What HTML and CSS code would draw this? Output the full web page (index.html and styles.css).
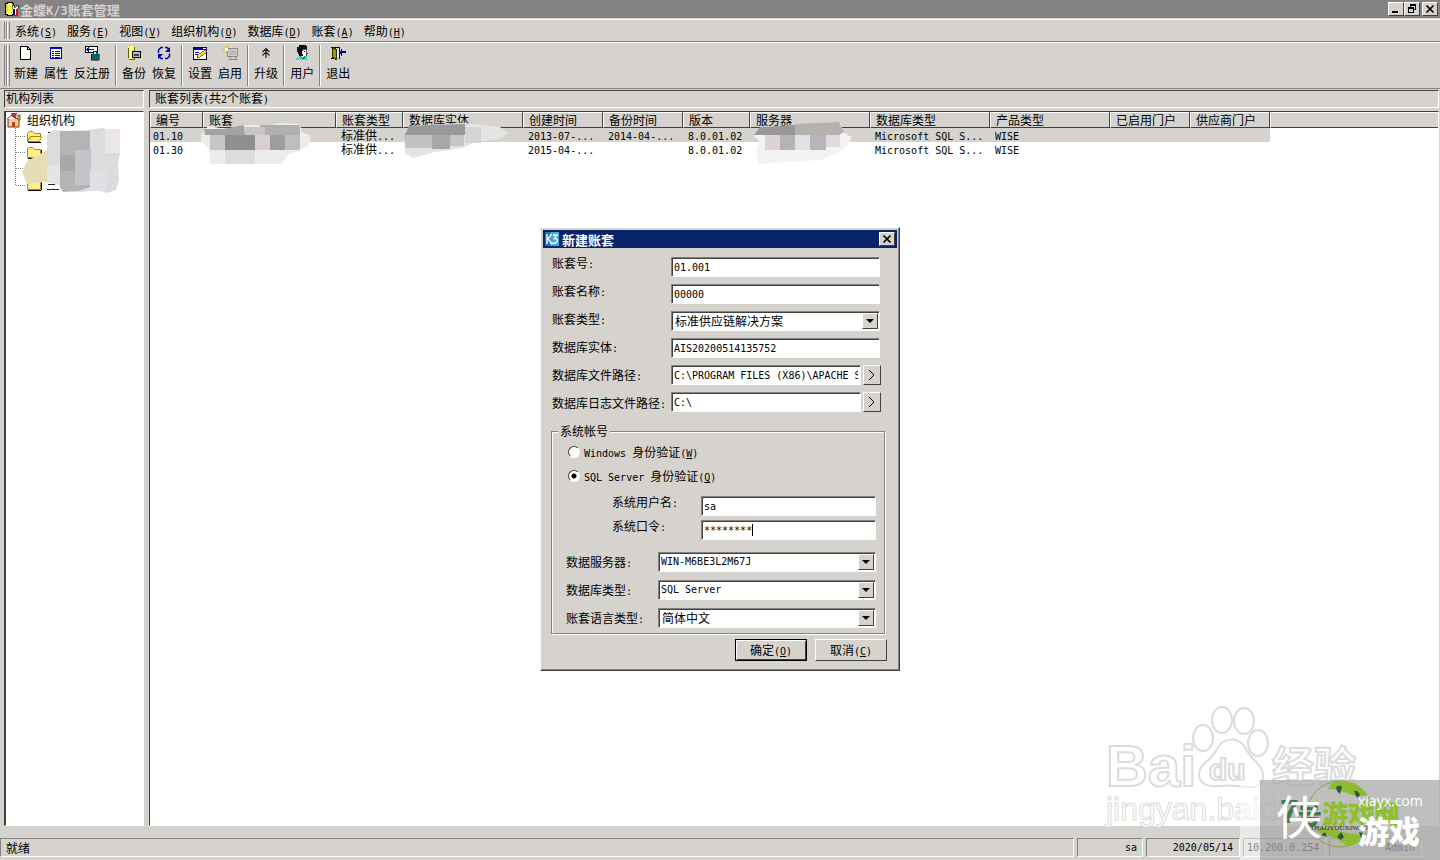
FILE: index.html
```html
<!DOCTYPE html>
<html lang="zh-CN">
<head>
<meta charset="utf-8">
<title>金蝶K/3账套管理</title>
<link rel="stylesheet" href="styles.css">
</head>
<body>
<header class="titlebar">
  <svg class="app-icon" width="16" height="16" viewBox="0 0 16 16" shape-rendering="crispEdges"><path d="M1 2h2V1h5v1h1v11H8v1H3v-1H1z" fill="#ff6" stroke="#000"/><path d="M2 3h2v9H2z" fill="#dd4"/><path d="M8 4h2v2h2V4h2v3l-2 2v5h-2V9L8 7z" fill="#fff" stroke="#000" stroke-width=".6"/><path d="M9 8h2v6H9z" fill="#008"/><path d="M12 8h2v7h-2z" fill="#d11"/></svg>
  <h1 class="title">金蝶<span class="lt">K/3</span>账套管理</h1>
  <div class="win-buttons">
    <button class="win-btn" aria-label="最小化"><svg width="12" height="10" shape-rendering="crispEdges"><path d="M2 7h6v2H2z"/></svg></button>
    <button class="win-btn" aria-label="还原"><svg width="12" height="10" shape-rendering="crispEdges"><path d="M4 0h6v6H8V5h1V2H5v1H4zM2 3h6v6H2zM3 5v3h4V5z" fill-rule="evenodd"/></svg></button>
    <button class="win-btn last" aria-label="关闭"><svg width="12" height="10"><path d="M2.500 1.500l7 7M9.500 1.500l-7 7" stroke="#000" stroke-width="1.700"/></svg></button>
  </div>
</header>

<nav class="menubar">
  <span class="grip"></span>
  <button>系统<span class="a">(<u>S</u>)</span></button>
  <button>服务<span class="a">(<u>E</u>)</span></button>
  <button>视图<span class="a">(<u>V</u>)</span></button>
  <button>组织机构<span class="a">(<u>O</u>)</span></button>
  <button>数据库<span class="a">(<u>D</u>)</span></button>
  <button>账套<span class="a">(<u>A</u>)</span></button>
  <button>帮助<span class="a">(<u>H</u>)</span></button>
</nav>

<div class="toolbar">
  <span class="grip"></span>
  <button><svg class="ico" viewBox="0 0 16 16" shape-rendering="crispEdges"><path d="M2.500 1.500h7l3 3v10h-10z" fill="#fff" stroke="#000"/><path d="M9.500 1.500v3h3" fill="none" stroke="#000"/></svg>新建</button>
  <button><svg class="ico" viewBox="0 0 16 16" shape-rendering="crispEdges"><path d="M2.500 2.500h11v11h-11z" fill="#fff" stroke="#008"/><path d="M2 2h12v2H2zM4 6h2v1H4zM7 6h5v1H7zM4 8h2v1H4zM7 8h5v1H7zM4 10h2v1H4zM7 10h5v1H7zM4 12h2v1H4zM7 12h5v1H7z" fill="#00c"/></svg>属性</button>
  <button><svg class="ico" viewBox="0 0 16 16" shape-rendering="crispEdges"><path d="M1.500 1.500h12v6h-12z" fill="#fff" stroke="#000"/><path d="M2 4h1V3h1V2h1v2h5v1H5v2H4V6H3V5H2z" fill="#00a"/><path d="M9 6h4v3h2v6H7V9h2z" fill="#066" stroke="#000" stroke-width=".5"/><path d="M10 7h2v2h-2z" fill="#ddd"/></svg>反注册</button>
  <span class="sep"></span>
  <button><svg class="ico" viewBox="0 0 16 16" shape-rendering="crispEdges"><path d="M2 2h2V1h4v1h1v12H3v-1H2z" fill="#ff4"/><path d="M2 3v10M8.500 2v12M3 14.500h6" stroke="#660" fill="none"/><path d="M4 2h2v11H4z" fill="#ffa"/><path d="M6.500 6.500h8v6h-8z" fill="#bbb" stroke="#000"/><path d="M8 9h5v2H8z" fill="#444"/></svg>备份</button>
  <button><svg class="ico" viewBox="0 0 16 16"><path d="M2.500 8V5L5 2.500h2M9 2.500h2l2 2M13.500 8.500v3l-2.500 2H9M7 13.500H5l-2-2" fill="none" stroke="#00a" stroke-width="1.500"/><path d="M14 2v5H9zM2 14V9h5z" fill="#00a"/></svg>恢复</button>
  <span class="sep"></span>
  <button><svg class="ico" viewBox="0 0 16 16" shape-rendering="crispEdges"><path d="M1.500 2.500h13v12h-13z" fill="#fff" stroke="#000"/><path d="M1 2h14v3H1zM3 7h4v1H3zM3 9h3v1H3z" fill="#00a"/><path d="M11 3h3v1h-3z" fill="#fff"/><path d="M5 13l1-3 7-5 2 2-7 5z" fill="#fd3" stroke="#600" stroke-width=".6"/></svg>设置</button>
  <button><svg class="ico" viewBox="0 0 16 16" shape-rendering="crispEdges"><path d="M5.500 3.500h10v8h-10zM8 12v2h5v-2M6 14.500h10" fill="none" stroke="#888"/><path d="M7 5h7v5H7z" fill="#bbb"/><path d="M4 0v9M0 4h9M1 1l6 6M7 1L1 7" stroke="#cc3"/><path d="M3 3h3v3H3z" fill="#ffc"/></svg>启用</button>
  <span class="sep"></span>
  <button><svg class="ico" viewBox="0 0 16 16"><path d="M4.500 7L8 3.500 11.500 7M4.500 10.500L8 7l3.500 3.500M8 4v9" fill="none" stroke="#222" stroke-width="1.200"/></svg>升级</button>
  <span class="sep"></span>
  <button><svg class="ico" viewBox="0 0 16 16" shape-rendering="crispEdges"><path d="M2 15l1-3 4-1 4 1 3 3z" fill="#4dd"/><path d="M7 4h5v4h1v1h-1v3H8z" fill="#fff" stroke="#000" stroke-width=".6"/><path d="M3 2h2V0h7v1h1v3H9v2H8v3h1v2H5V9H4V7H3z" fill="#111"/><path d="M10 6h1v1h-1z"/><path d="M6 11l3 3 2-3" fill="#fff" stroke="#066"/></svg>用户</button>
  <span class="sep"></span>
  <button><svg class="ico" viewBox="0 0 16 16" shape-rendering="crispEdges"><path d="M1 2.500h8V13M1 13h2M9 13h1" fill="none" stroke="#000"/><path d="M2.500 2.500l4 2v10l-4-2z" fill="#990" stroke="#330"/><path d="M7 4h2v8H7z" fill="#eee"/><path d="M9 7h1V6h1V4h1v2h4v2h-4v3h-1V9h-1V8H9z" fill="#00a"/></svg>退出</button>
</div>

<main class="workspace">
  <section class="side">
    <h2 class="pane-title">机构列表</h2>
    <div class="pane tree">
      <div class="root"><svg width="16" height="16" viewBox="0 0 16 16"><path d="M2 7l5-3 6 4v7H2z" fill="#fc8" stroke="#633"/><path d="M1 7l5-4 4 4" fill="#fff" stroke="#844"/><path d="M5 1l6 0-1 5-4-1z" fill="#b33"/><path d="M12 3h2v5h-2z" fill="#fd4" stroke="#652"/><path d="M6 10h3v5H6z" fill="#a42"/></svg>组织机构</div>
      <svg class="tree-art" width="134" height="72" viewBox="6 128 134 72">
        <path d="M15.500 128v58M16 136.500h10M16 152.500h10M16 168.500h10M16 185.500h10" stroke="#888" stroke-dasharray="1 1" fill="none"/>
        <g fill="#fe8" stroke="#a80"><path d="M27.500 141.500v-8l2-2h3l2 2h6v3h-10z"/><path d="M27.500 141.500l3-5h11l-2 5z"/><path d="M27.500 157.500v-9l2-1h3l2 2h6v8z"/><path d="M27.500 173.500v-9h13v9zM27.500 189.500v-9h13v9z"/></g>
        <path d="M28 142.500h13M28 158.500h13M41.500 150v8M28 190.500h13M41.500 181v9" stroke="#000"/>
        <path d="M48 132.500h8M64 131.500h3M85 132.500h7M48 184.500h7M47 189.500h12M49 149.500h3M114 131l2 3M116 152l-1 3M116 165l-1 6M116 185l-2 4" stroke="#222"/>
        <path d="M22 172l5-11 20-11v32l-20 2z" fill="#e5ddb8"/>
        <path d="M47 135l6-5 12 1 22-1 15-2 18 4v20l-2 13 1 15-3 10-9 3-10-3-17 2-15-1-5-6-13-3z" fill="#dcdcde"/>
        <path d="M60 131h30v56l-12 4-15 1-3-5z" fill="#b4b4b6"/><path d="M75 150h16v35H75z" fill="#c4c4c8"/><path d="M60 155h15v16H60z" fill="#a8a8aa"/><path d="M105 129h15v24h-15z" fill="#ece6e9"/><path d="M90 171h17v20H90z" fill="#e2dfe4"/><path d="M47 165h13v18H47z" fill="#e5e5e7"/>
      </svg>
    </div>
  </section>
  <section class="content">
    <h2 class="pane-title wide">账套列表<span class="a">(</span>共<span class="a">2</span>个账套<span class="a">)</span></h2>
    <div class="pane list">
      <table>
        <colgroup><col class="w53"><col class="w133"><col class="w67"><col class="w120"><col class="w80"><col class="w80"><col class="w67"><col class="w120"><col class="w120"><col class="w120"><col class="w80"><col class="w80"><col></colgroup>
        <thead><tr><th>编号</th><th>账套</th><th>账套类型</th><th>数据库实体</th><th>创建时间</th><th>备份时间</th><th>版本</th><th>服务器</th><th>数据库类型</th><th>产品类型</th><th>已启用门户</th><th>供应商门户</th><th></th></tr></thead>
        <tbody>
          <tr class="selected"><td><span class="a">01.10</span></td><td></td><td>标准供<span class="a">...</span></td><td></td><td><span class="a">2013-07-...</span></td><td><span class="a">2014-04-...</span></td><td><span class="a">8.0.01.02</span></td><td></td><td><span class="a">Microsoft SQL S...</span></td><td><span class="a">WISE</span></td><td></td><td></td><td></td></tr>
          <tr><td><span class="a">01.30</span></td><td></td><td>标准供<span class="a">...</span></td><td></td><td><span class="a">2015-04-...</span></td><td></td><td><span class="a">8.0.01.02</span></td><td></td><td><span class="a">Microsoft SQL S...</span></td><td><span class="a">WISE</span></td><td></td><td></td><td></td></tr>
        </tbody>
      </table>
      <svg class="redaction" width="720" height="56" viewBox="150 112 720 56">
        <path d="M201 135l7-9 18 3 18-4 26 0 10-2 20 1 2 8 9 4-2 9-10 6-10 3-8 10-71 0-1-15-8-8z" fill="#ececec"/>
        <path d="M204 129l20 0 20-4 1 10h-40z" fill="#a2a2a0"/><path d="M210 135h16v15h-16z" fill="#c6c6c6"/><path d="M225 135h30v15h-30z" fill="#8f908e"/><path d="M225 150h30v14h-30z" fill="#dcdcdc"/><path d="M255 135h15v15h-15z" fill="#d8d0d0"/><path d="M270 135h16v15h-16z" fill="#9d9da0"/><path d="M285 135h15v15h-15z" fill="#bebec2"/><path d="M260 125h40v10h-40z" fill="#b0b0b0"/><path d="M245 127h20v8h-20z" fill="#c8c6c6"/>
        <path d="M404 140l4-11 12-4 45-2 35 4 8 6-8 6-25 3-12 6-28 4-22 6-8-5z" fill="#e4e4e4"/>
        <path d="M405 135l4-9 18-1 38-1v11z" fill="#999"/><path d="M404 135h28v13h-26z" fill="#c2c2c2"/><path d="M432 135h18v14h-18z" fill="#a7a7aa"/><path d="M450 135h14v11h-14z" fill="#c5c5c7"/><path d="M465 127h16v16h-16z" fill="#d4d4d4"/>
        <path d="M754 136l8-9 52-3 26-2 4 11 8 4-4 8-10 8-18 7-62 4-2-14 4-8z" fill="#f3f3f4"/>
        <path d="M754 135l6-8 35-2v10z" fill="#999896"/><path d="M795 124l44-2 5 10-5 3h-44z" fill="#b4b2af"/><path d="M765 135h15v15h-15z" fill="#ddd3d5"/><path d="M780 135h15v15h-15z" fill="#b4b4b8"/><path d="M795 135h15v15h-15z" fill="#e2e2e4"/><path d="M810 135h16v15h-16z" fill="#b8b6ba"/><path d="M826 135h14v12h-14z" fill="#e1d9dc"/>
      </svg>
    </div>
  </section>
</main>

<footer class="statusbar">
  <div class="cell grow">就绪</div>
  <div class="cell user a">sa</div>
  <div class="cell date a">2020/05/14</div>
  <div class="cell addr a">10.200.0.254</div>
  <div class="cell role a">Admin</div>
</footer>

<div class="watermark">
  <svg width="380" height="170" viewBox="0 0 380 170">
    <g fill="#fff" stroke="#dcdcdc" stroke-width="2">
      <ellipse cx="162" cy="30" rx="10" ry="13"/><ellipse cx="184" cy="31" rx="10" ry="13"/><ellipse cx="143" cy="48" rx="10" ry="13"/><ellipse cx="198" cy="53" rx="10" ry="13"/>
      <path d="M139 84c0-10 12-13 18-25 6-12 22-13 29 0 5 11 17 15 17 27 0 10-9 12-16 11-11-2-20-2-30-1-10 1-18-3-18-12z"/>
      <text class="wm-brand" x="46" y="96">Bai</text>
      <text class="wm-du" x="149" y="90">du</text>
      <text class="wm-cn" x="212" y="92">经验</text>
      <text class="wm-url" x="46" y="130" stroke-width="1">jingyan.baidu.com</text>
    </g>
    <path d="M180 90h200v80H180z" fill="#fff" fill-opacity=".5"/>
    <path d="M200 90h180v80H200z" fill="#808080" fill-opacity=".5"/>
    <circle cx="280" cy="124" r="33" fill="none" stroke="#86a83c"/>
    <path d="M268 99c3-6 8-8 14-8 11 0 20 5 25 14-8 2-13 1-18-1-7-3-13-5-21-5z" fill="#8dbd2f"/>
    <path d="M255 142c9 2 18 4 28 11l4 3c9-1 15-5 18-10-10-3-21-2-28-6-8-3-15-3-22 2z" fill="#8dbd2f"/>
    <path d="M276 97q4-3 6 0l-2 7-3-3zM294 101q4-1 6 4l-3 3zM277 147l4-5 3 5-3 3zM261 145l4-3 2 5zM299 142l4 1-2 5z" fill="#35553a"/>
    <text class="logo-seven" x="220" y="133" fill="#3d7a50">7</text><text class="logo-cn" x="236" y="134" fill="#3d7a50">号</text>
    <text class="logo-cn" x="262" y="134" fill="#8dc02c">游戏网</text>
    <text class="logo-xia" x="216" y="144" fill="#fff">侠</text>
    <text class="logo-en" x="250" y="140" fill="#222">THAOYOUXIWANG</text>
    <text class="logo-game" x="298" y="153" fill="#fff">游戏</text>
    <text class="logo-url" x="298" y="116" fill="#fff">xiayx.com</text>
  </svg>
</div>

<form class="dialog" role="dialog" aria-labelledby="dlg-title" onsubmit="return false">
  <div class="dialog-title">
    <svg width="14" height="14" viewBox="0 0 14 14"><path d="M0 0h14v14H0z" fill="#27a"/><path d="M6 0h8v14H5z" fill="#4ad"/><path d="M2 2v10M6.500 2L3 7l4 5M8 3h4L9.500 6.500c5 0 3 6-2 4.500" fill="none" stroke="#fff" stroke-width="1.400"/></svg>
    <h2 class="title" id="dlg-title">新建账套</h2>
    <button type="button" class="win-btn" aria-label="关闭"><svg width="12" height="10"><path d="M2.500 1.500l7 7M9.500 1.500l-7 7" stroke="#000" stroke-width="1.700"/></svg></button>
  </div>
  <div class="basic">
    <div class="labels">
      <label for="no">账套号<span class="a">:</span></label>
      <label for="name">账套名称<span class="a">:</span></label>
      <label for="type">账套类型<span class="a">:</span></label>
      <label for="entity">数据库实体<span class="a">:</span></label>
      <label for="file">数据库文件路径<span class="a">:</span></label>
      <label for="log">数据库日志文件路径<span class="a">:</span></label>
    </div>
    <div class="fields">
      <input id="no" class="box" value="01.001">
      <input id="name" class="box" value="00000">
      <span class="combo"><select id="type" class="box cjk"><option>标准供应链解决方案</option></select><i class="arrow"></i></span>
      <input id="entity" class="box" value="AIS20200514135752">
      <div class="path"><input id="file" class="box" value="C:\PROGRAM FILES (X86)\APACHE S"><button type="button" class="browse" aria-label="浏览文件路径"><svg width="8" height="12"><path d="M1 1l5 5-5 5" fill="none" stroke="#000"/></svg></button></div>
      <div class="path"><input id="log" class="box" value="C:\"><button type="button" class="browse" aria-label="浏览日志路径"><svg width="8" height="12"><path d="M1 1l5 5-5 5" fill="none" stroke="#000"/></svg></button></div>
    </div>
  </div>
  <fieldset class="account">
    <legend>系统帐号</legend>
    <label class="radio"><input type="radio" name="auth"><span><span class="a">Windows </span>身份验证<span class="a">(<u>W</u>)</span></span></label>
    <label class="radio"><input type="radio" name="auth" checked><span><span class="a">SQL Server </span>身份验证<span class="a">(<u>Q</u>)</span></span></label>
    <div class="cred">
      <label for="user">系统用户名<span class="a">:</span></label><input id="user" class="box" value="sa">
      <label for="pwd">系统口令<span class="a">:</span></label><span class="combo"><input id="pwd" class="box" value="********"><i class="caret"></i></span>
    </div>
    <div class="server">
      <label for="srv">数据服务器<span class="a">:</span></label><span class="combo"><select id="srv" class="box"><option>WIN-M6BE3L2M67J</option></select><i class="arrow"></i></span>
      <label for="db">数据库类型<span class="a">:</span></label><span class="combo"><select id="db" class="box"><option>SQL Server</option></select><i class="arrow"></i></span>
      <label for="lang">账套语言类型<span class="a">:</span></label><span class="combo"><select id="lang" class="box cjk"><option>简体中文</option></select><i class="arrow"></i></span>
    </div>
  </fieldset>
  <div class="actions">
    <button class="btn default">确定<span class="a">(<u>O</u>)</span></button>
    <button type="button" class="btn">取消<span class="a">(<u>C</u>)</span></button>
  </div>
</form>
</body>
</html>
```

FILE: styles.css
```css
:root {
  --face: #d6d3ce;
  --shadow: #848284;
  --dark: #424142;
  --mono: "DejaVu Sans Mono", "Liberation Mono", monospace;
  --cjk: "Noto Sans CJK SC", sans-serif;
}
* { box-sizing: border-box; }
body {
  margin: 0;
  height: 100vh;
  display: flex;
  flex-direction: column;
  position: relative;
  overflow: hidden;
  background: var(--face);
  color: #000;
  font: 12px/16px var(--cjk);
}
button { font: inherit; color: inherit; background: none; border: 0; padding: 0; margin: 0; }
h1, h2 { margin: 0; font: inherit; }
.a { font-family: var(--mono); font-size: 10px; white-space: pre; }
span.a { line-height: 1; }
u { text-underline-offset: 1px; }

.titlebar {
  flex: none;
  height: 18px;
  padding: 0 2px 0 4px;
  display: flex;
  align-items: center;
  background: var(--shadow);
}
.title { flex: 1; font-size: 13px; font-weight: bold; line-height: 17px; }
.titlebar .title { color: var(--face); }
.lt { font-family: var(--mono); font-size: 12px; line-height: 1; }
.win-buttons { display: flex; }
.win-btn {
  width: 16px;
  height: 14px;
  display: grid;
  place-items: center;
  background: var(--face);
  border: 1px solid;
  border-color: #fff var(--dark) var(--dark) #fff;
}
.win-btn.last { margin-left: 2px; }

.grip {
  width: 6px;
  margin-right: 5px;
  border: solid;
  border-width: 0 1px;
  border-color: #fff var(--shadow);
  background: linear-gradient(90deg, var(--face) 0 1px, var(--shadow) 1px 2px, #fff 2px 3px, var(--face) 3px);
}
.menubar {
  flex: none;
  height: 23px;
  margin-top: 1px;
  padding: 2px 4px;
  display: flex;
  gap: 10px;
  border-top: 1px solid #fff;
  border-bottom: 1px solid var(--shadow);
}
.menubar .grip { margin-right: -5px; }
.toolbar {
  flex: none;
  height: 47px;
  padding: 2px 4px;
  display: flex;
  border-top: 1px solid #fff;
  border-bottom: 1px solid var(--shadow);
}
.toolbar .grip { margin-right: 1px; }
.toolbar button { padding: 0 3px 2px; display: flex; flex-direction: column; align-items: center; gap: 4px; }
.ico { width: 16px; height: 16px; }
.sep { width: 2px; margin: 0 2px; border-left: 1px solid var(--shadow); border-right: 1px solid #fff; }

.workspace { flex: 1; min-height: 0; display: flex; gap: 5px; padding: 1px 1px 0 4px; }
.side { flex: none; width: 140px; }
.content { flex: 1; min-width: 0; }
.side, .content { display: flex; flex-direction: column; gap: 3px; }
.pane-title {
  flex: none;
  height: 18px;
  padding-left: 1px;
  line-height: 14px;
  border: 1px solid;
  border-color: var(--dark) #fff #fff var(--dark);
}
.pane-title.wide { padding-left: 5px; }
.pane {
  flex: 1;
  min-height: 0;
  position: relative;
  background: #fff;
  border: 1px solid;
  border-color: var(--dark) #fff #fff var(--dark);
}
.tree { border-left-width: 2px; }
.root { display: flex; gap: 5px; }
.tree-art { display: block; }
.redaction { position: absolute; left: 0; top: 0; }

.list table { width: 100%; table-layout: fixed; border-collapse: separate; border-spacing: 0; }
.w53 { width: 53px; } .w67 { width: 67px; } .w80 { width: 80px; } .w120 { width: 120px; } .w133 { width: 133px; }
th {
  height: 16px;
  padding: 0 0 0 5px;
  font-weight: normal;
  line-height: 14px;
  text-align: left;
  white-space: nowrap;
  background: var(--face);
  border: 1px solid;
  border-color: #fff var(--dark) var(--dark) #fff;
}
th:last-child { border-right: 0; }
td { height: 13px; padding: 0 0 0 5px; line-height: 13px; white-space: nowrap; }
td:first-child { padding-left: 3px; }
.selected td:not(:last-child) { background: var(--face); }

.statusbar { flex: none; display: flex; gap: 3px; padding: 12px 18px 3px 0; }
.cell {
  height: 19px;
  padding: 0 6px;
  line-height: 17px;
  text-align: right;
  border: 1px solid;
  border-color: var(--shadow) #fff #fff var(--shadow);
}
.cell.grow { flex: 1; padding: 0 5px; text-align: left; }
.user { width: 66px; padding-right: 5px; }
.date { width: 94px; }
.addr { width: 83px; padding: 0 3px; text-align: left; }
.role { width: 93px; }

.watermark { position: absolute; right: 0; bottom: 0; pointer-events: none; }
.watermark svg { display: block; }
.watermark text { font-family: "Liberation Sans", "Noto Sans CJK SC", sans-serif; }
.watermark .wm-brand { font-size: 58px; font-weight: bold; }
.watermark .wm-du { font-size: 30px; font-weight: bold; }
.watermark .wm-cn { font-size: 42px; font-weight: bold; }
.watermark .wm-url { font-size: 32px; }
.watermark .logo-cn { font-size: 26px; font-weight: 900; }
.watermark .logo-seven { font-size: 34px; font-weight: bold; }
.watermark .logo-en { font: 7px "Liberation Serif", serif; }
.watermark .logo-xia { font-size: 46px; font-weight: 400; }
.watermark .logo-game { font-size: 31px; font-weight: 900; }
.watermark .logo-url { font: 14px "Open Sans", sans-serif; }

.dialog {
  position: absolute;
  left: calc(50% - 180px);
  top: 227px;
  width: 360px;
  padding: 2px;
  background: var(--face);
  border: 1px solid;
  border-color: #fff var(--dark) var(--dark) #fff;
  box-shadow: inset -1px -1px var(--shadow);
}
.dialog-title {
  height: 18px;
  padding: 0 2px;
  display: flex;
  align-items: center;
  gap: 3px;
  color: #fff;
  background: #08246b;
}
.basic { display: flex; padding: 7px 0 0 9px; }
.labels { width: 119px; display: flex; flex-direction: column; gap: 12px; white-space: nowrap; }
.fields { width: 210px; padding-top: 2px; display: flex; flex-direction: column; gap: 7px; }
.fields > .box, .fields > .combo { width: 209px; }
.box {
  display: block;
  width: 100%;
  height: 20px;
  margin: 0;
  padding: 0 2px;
  appearance: none;
  border: 1px solid;
  border-color: var(--shadow) #fff #fff var(--shadow);
  border-radius: 0;
  box-shadow: inset 1px 1px var(--dark);
  outline: 0;
  background: #fff;
  color: #000;
  font: 10px/18px var(--mono);
}
.box.cjk { font: 12px/18px var(--cjk); padding: 0 3px; }
.combo { display: block; position: relative; }
.arrow {
  position: absolute;
  top: 2px;
  right: 2px;
  width: 16px;
  height: 16px;
  display: grid;
  place-items: center;
  pointer-events: none;
  background: var(--face);
  border: 1px solid;
  border-color: #fff var(--dark) var(--dark) #fff;
}
.arrow::after { content: ""; border: 4px solid transparent; border-top-color: #000; border-bottom: 0; }
.caret { position: absolute; left: 51px; top: 4px; width: 1px; height: 12px; background: #000; }
.path { display: flex; gap: 2px; }
.browse {
  flex: none;
  width: 18px;
  height: 20px;
  display: grid;
  place-items: center;
  border: 1px solid;
  border-color: #fff var(--dark) var(--dark) #fff;
}

.account {
  position: relative;
  margin: 11px 12px 0 8px;
  padding: 5px 8px 5px 14px;
  border: 1px solid var(--shadow);
  box-shadow: 1px 1px #fff, inset 1px 1px #fff;
}
.account legend { margin-left: -8px; padding: 0 2px; background: var(--face); }
.radio { display: flex; align-items: center; gap: 4px; margin: 0 0 8px 2px; }
.radio input {
  appearance: none;
  width: 12px;
  height: 12px;
  margin: 0;
  border: 1px solid;
  border-color: var(--dark) #fff #fff var(--dark);
  border-radius: 50%;
  background: #fff;
}
.radio input:checked { background: radial-gradient(circle, #000 0 2px, #fff 3px); }
.cred {
  display: grid;
  grid-template-columns: 89px 1fr;
  row-gap: 4px;
  padding: 4px 0 0 46px;
}
.cred label { line-height: 12px; }
.server {
  display: grid;
  grid-template-columns: 92px 1fr;
  row-gap: 8px;
  align-items: center;
  padding-top: 12px;
}
.actions { display: flex; justify-content: flex-end; gap: 8px; padding: 5px 10px 7px; }
.btn {
  width: 72px;
  height: 22px;
  line-height: 18px;
  border: 1px solid;
  border-color: #fff var(--dark) var(--dark) #fff;
}
.btn.default { border: 1px solid #000; box-shadow: inset 1px 1px #fff, inset -1px -1px var(--dark); }
```
